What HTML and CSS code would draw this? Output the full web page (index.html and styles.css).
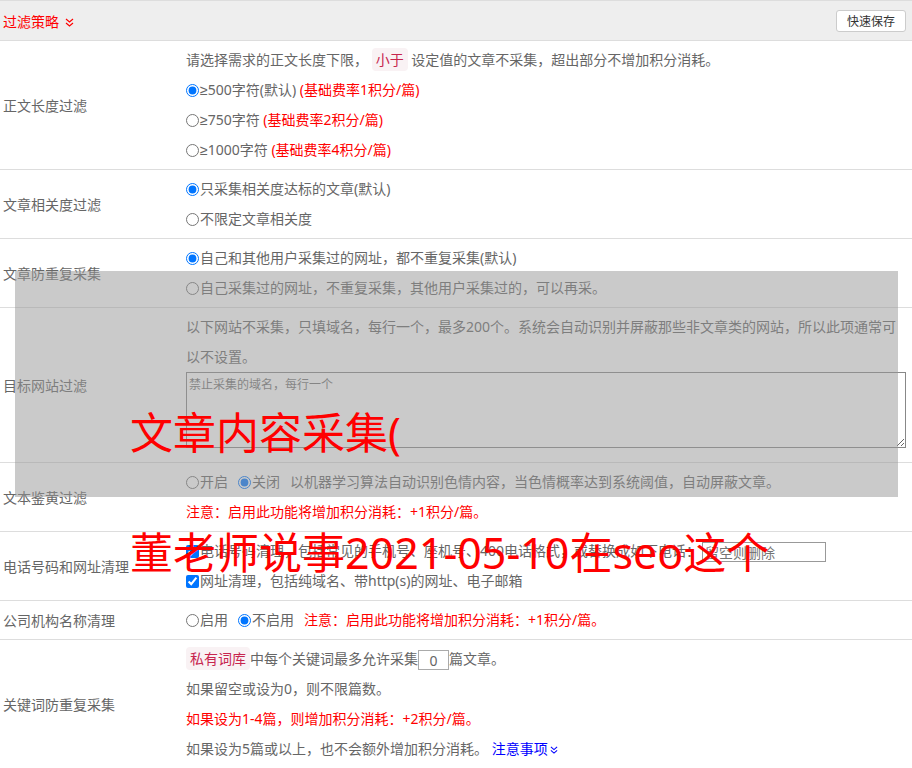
FILE: index.html
```html
<!DOCTYPE html>
<html lang="zh-CN">
<head>
    <meta charset="UTF-8">
    <meta name="viewport" content="width=device-width, initial-scale=1.0">
    <title>过滤策略</title>
    <link rel="stylesheet" href="styles.css">
</head>
<body>
    <div class="panel">
        <div class="panel-head">
            <span class="panel-title">过滤策略
                <svg class="chevrons" width="9" height="9" viewBox="0 0 9 9"><polyline points="1,1 4.5,4 8,1"/><polyline points="1,5 4.5,8 8,5"/></svg>
            </span>
            <button class="btn-save">快速保存</button>
        </div>

        <div class="row">
            <div class="row-label">正文长度过滤</div>
            <div class="row-field">
                <p>请选择需求的正文长度下限， <code class="tag">小于</code> 设定值的文章不采集，超出部分不增加积分消耗。</p>
                <p><label><input type="radio" name="len" checked><span class="ge">≥</span>500字符(默认)</label> <span class="red">(基础费率1积分/篇)</span></p>
                <p><label><input type="radio" name="len"><span class="ge">≥</span>750字符</label> <span class="red">(基础费率2积分/篇)</span></p>
                <p><label><input type="radio" name="len"><span class="ge">≥</span>1000字符</label> <span class="red">(基础费率4积分/篇)</span></p>
            </div>
        </div>

        <div class="row">
            <div class="row-label">文章相关度过滤</div>
            <div class="row-field">
                <p><label><input type="radio" name="rel" checked>只采集相关度达标的文章(默认)</label></p>
                <p><label><input type="radio" name="rel">不限定文章相关度</label></p>
            </div>
        </div>

        <div class="row">
            <div class="row-label">文章防重复采集</div>
            <div class="row-field">
                <p><label><input type="radio" name="dup" checked>自己和其他用户采集过的网址，都不重复采集(默认)</label></p>
                <p><label><input type="radio" name="dup">自己采集过的网址，不重复采集，其他用户采集过的，可以再采。</label></p>
            </div>
        </div>

        <div class="row">
            <div class="row-label">目标网站过滤</div>
            <div class="row-field">
                <p>以下网站不采集，只填域名，每行一个，最多200个。系统会自动识别并屏蔽那些非文章类的网站，所以此项通常可以不设置。</p>
                <textarea class="domains" placeholder="禁止采集的域名，每行一个"></textarea>
            </div>
        </div>

        <div class="row">
            <div class="row-label">文本鉴黄过滤</div>
            <div class="row-field">
                <p><label class="opt"><input type="radio" name="porn">开启</label><label class="opt"><input type="radio" name="porn" checked>关闭</label>以机器学习算法自动识别色情内容，当色情概率达到系统阈值，自动屏蔽文章。</p>
                <p class="red">注意：启用此功能将增加积分消耗：+1积分/篇。</p>
            </div>
        </div>

        <div class="row">
            <div class="row-label">电话号码和网址清理</div>
            <div class="row-field">
                <p><label><input type="checkbox" checked>电话号码清理，包括常见的手机号、座机号、400电话格式，或替换成如下电话：</label><input type="text" class="phone" placeholder="留空则删除"></p>
                <p><label><input type="checkbox" checked>网址清理，包括纯域名、带http(s)的网址、电子邮箱</label></p>
            </div>
        </div>

        <div class="row">
            <div class="row-label">公司机构名称清理</div>
            <div class="row-field">
                <p><label class="opt"><input type="radio" name="org">启用</label><label class="opt"><input type="radio" name="org" checked>不启用</label><span class="red">注意：启用此功能将增加积分消耗：+1积分/篇。</span></p>
            </div>
        </div>

        <div class="row">
            <div class="row-label">关键词防重复采集</div>
            <div class="row-field">
                <p><code class="tag">私有词库</code>中每个关键词最多允许采集<input type="text" class="num" value="0">篇文章。</p>
                <p>如果留空或设为0，则不限篇数。</p>
                <p class="red">如果设为1-4篇，则增加积分消耗：+2积分/篇。</p>
                <p>如果设为5篇或以上，也不会额外增加积分消耗。 <a href="#" class="more">注意事项<svg class="chevrons" width="8" height="8" viewBox="0 0 9 9"><polyline points="1,1 4.5,4 8,1"/><polyline points="1,5 4.5,8 8,5"/></svg></a></p>
            </div>
        </div>
    </div>

    <div class="mask"></div>
    <div class="watermark">文章内容采集(<br>董老师说事2021-05-10在seo这个</div>
</body>
</html>
```

FILE: styles.css
```css
body {
    margin: 0;
    font-family: "Noto Sans", "Noto Sans CJK SC", sans-serif;
    font-size: 14px;
    color: #666;
    background-color: #fff;
}
.panel {
    border-top: 1px solid #ddd;
}
.panel-head {
    display: flex;
    justify-content: space-between;
    align-items: center;
    height: 39px;
    padding: 0 6px 0 3px;
    background-color: #eee;
    border-bottom: 1px solid #ddd;
}
.panel-title {
    color: #f00;
}
.chevrons {
    fill: none;
    stroke: currentColor;
    stroke-width: 1.2;
    margin-left: 2px;
}
.btn-save {
    height: 22px;
    padding: 0 10px;
    background-color: #fff;
    border: 1px solid #ccc;
    border-radius: 3px;
    font-family: inherit;
    font-size: 12px;
    color: #333;
    cursor: pointer;
}
.row {
    display: flex;
    align-items: center;
    border-bottom: 1px solid #ddd;
}
.row-label {
    width: 186px;
    flex-shrink: 0;
    padding-left: 3px;
    box-sizing: border-box;
}
.row-field {
    flex: 1;
    padding: 4px 6px 4px 0;
}
.row-field p {
    margin: 0;
    line-height: 30px;
}
.row-field input[type="radio"],
.row-field input[type="checkbox"] {
    width: 13px;
    height: 13px;
    margin: 0 1px 0 0;
    vertical-align: -2px;
}
.ge {
    font-family: "Liberation Sans", sans-serif;
}
.opt {
    margin-right: 10px;
}
.red {
    color: #f00;
}
.tag {
    padding: 2px 4px;
    background-color: #f9f2f4;
    color: #c7254e;
    border-radius: 4px;
    font-family: inherit;
    font-size: 14px;
}
.domains {
    display: block;
    width: 100%;
    height: 76px;
    margin: 0 0 10px;
    padding: 2px;
    box-sizing: border-box;
    border: 1px solid #888;
    font-family: inherit;
    font-size: 12px;
    color: #666;
}
.phone {
    width: 124px;
    height: 20px;
    margin-left: 2px;
    padding: 0 2px;
    box-sizing: border-box;
    border: 1px solid #999;
    font-family: inherit;
    font-size: 14px;
    vertical-align: middle;
}
.num {
    width: 31px;
    height: 20px;
    padding: 0;
    box-sizing: border-box;
    border: 1px solid #aaa;
    text-align: center;
    font-family: inherit;
    font-size: 14px;
    color: #666;
    vertical-align: middle;
}
.more {
    color: #00f;
    text-decoration: none;
}
.mask {
    position: absolute;
    left: 15px;
    top: 271px;
    width: 883px;
    height: 226px;
    background-color: rgba(150, 150, 150, 0.5);
}
.watermark {
    position: absolute;
    left: 130px;
    top: 373px;
    font-size: 43px;
    line-height: 120px;
    color: #f00;
    white-space: nowrap;
}
```
